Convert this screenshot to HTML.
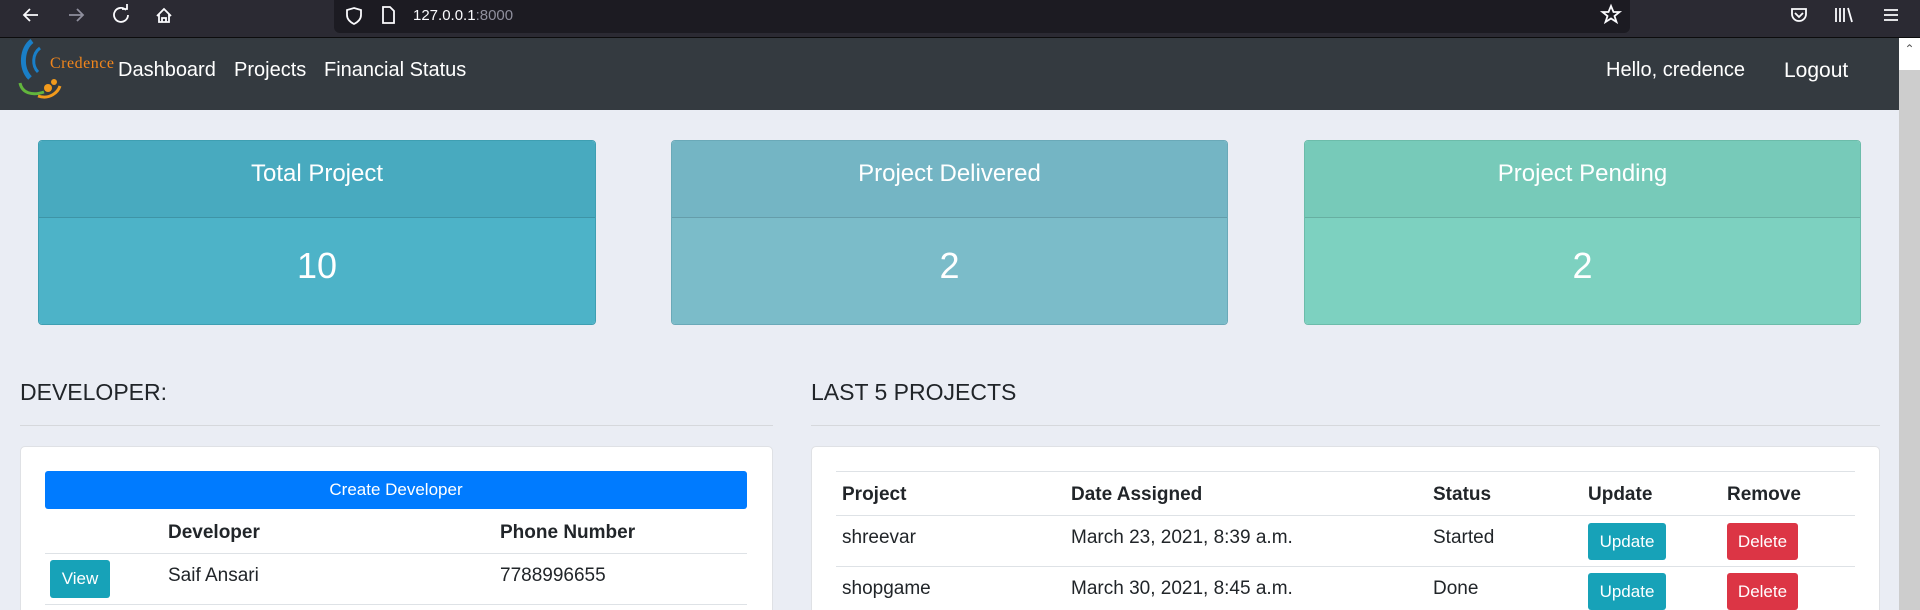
<!DOCTYPE html>
<html style="width:1920px;height:610px;overflow:hidden"><head><meta charset="utf-8"><style>
*{box-sizing:border-box;margin:0;padding:0}
body{width:1920px;height:610px;overflow:hidden;background:#eaedf4;font-family:"Liberation Sans",sans-serif;position:relative}
.abs{position:absolute}
.tb{left:0;top:0;width:1920px;height:38px;background:#2b2a33;border-bottom:1px solid #0c0c0d}
.url{left:334px;top:0;width:1296px;height:33px;background:#1c1b22;border-radius:0 0 6px 6px}
.nav{left:0;top:38px;width:1899px;height:72px;background:#343a40}
.nl{color:#fff;font-size:20px;top:59px}
.sb{left:1899px;top:38px;width:21px;height:572px;background:#cdcdcd}
.card{border-radius:4px;color:#fff;text-align:center;overflow:hidden}
.card .h{height:77px;line-height:66px;font-size:24px;border-bottom:1px solid rgba(0,0,0,.13)}
.card .b{height:108px;line-height:96px;font-size:36px}
.ttl{font-size:23px;color:#212529}
.hr{height:1px;background:#d6d8dc}
.panel{background:#fff;border-radius:5px;border:1px solid #dfe1e5}
.t{font-size:19px;color:#212529}
.bold{font-weight:bold}
.line{height:1px;background:#dee2e6}
.btn{color:#fff;font-size:17px;text-align:center;border-radius:3px}
</style></head><body>
<div class="abs tb"></div>
<div class="abs url"></div>
<svg class="abs" style="left:0;top:0" width="1920" height="38">
<g fill="none" stroke="#fbfbfe" stroke-width="1.8">
<path d="M38 15h-14M30 9l-6 6 6 6"/>
<path d="M69 15h14M77 9l6 6-6 6" stroke="#8f8f9d"/>
<path d="M126 10a7 7 0 1 0 2 5M122 9h5v-5"/>
<path d="M157 16l7-7 7 7M159 14v8h10v-8M162 22v-4h4v4"/>
<path d="M354 8l7 2v5c0 4-3 7-7 9-4-2-7-5-7-9v-5z"/>
<path d="M383 7h7l4 4v12h-11z"/>
<path d="M1611 6l2.5 6 6 0-5 4 2 6-5.5-3.5-5.5 3.5 2-6-5-4 6 0z"/>
<path d="M1792 9h14v5a7 7 0 0 1-14 0zM1795 13l4 4 4-4"/>
<path d="M1836 8v14M1840 8v14M1844 8v14M1848 8l4 14"/>
<path d="M1884 10h14M1884 15h14M1884 20h14"/>
</g>
<text x="413" y="20" fill="#fbfbfe" font-size="15" font-family="Liberation Sans">127.0.0.1<tspan fill="#8f8f9d">:8000</tspan></text>
</svg>
<div class="abs nav"></div>
<svg class="abs" style="left:16px;top:38px" width="100" height="62">
<path d="M16 3C6 10 4 30 14 40" stroke="#1a7fc8" stroke-width="5" fill="none"/>
<path d="M24 10C16 16 16 28 22 34" stroke="#1a7fc8" stroke-width="3" fill="none"/>
<path d="M4 45C6 55 16 58 28 54" stroke="#62b53d" stroke-width="3" fill="none"/>
<circle cx="32" cy="50" r="4" fill="#f29a1c"/><circle cx="38" cy="44" r="3" fill="#f29a1c"/>
<path d="M22 58C34 62 42 54 44 48" stroke="#f29a1c" stroke-width="3" fill="none"/>
<text x="34" y="30" fill="#f2861c" font-size="16" font-family="Liberation Serif" textLength="64">Credence</text>
</svg>
<div class="abs nl" style="left:118px">Dashboard</div>
<div class="abs nl" style="left:234px">Projects</div>
<div class="abs nl" style="left:324px">Financial Status</div>
<div class="abs nl" style="left:1606px">Hello, credence</div>
<div class="abs nl" style="left:1784px;font-size:21px">Logout</div>
<div class="abs sb"><div style="height:32px;background:#fff;color:#555;text-align:center;font-size:12px;line-height:22px">&#8963;</div></div>

<div class="abs card" style="left:38px;top:140px;width:558px;height:185px;border:1px solid #3e9fb2"><div class="h" style="background:#48aabf">Total Project</div><div class="b" style="background:#4db3c8">10</div></div>
<div class="abs card" style="left:671px;top:140px;width:557px;height:185px;border:1px solid #6aa9b8"><div class="h" style="background:#74b5c4">Project Delivered</div><div class="b" style="background:#7bbcc9">2</div></div>
<div class="abs card" style="left:1304px;top:140px;width:557px;height:185px;border:1px solid #6cbcaa"><div class="h" style="background:#77cab9">Project Pending</div><div class="b" style="background:#7dd1c0">2</div></div>

<div class="abs ttl" style="left:20px;top:379px">DEVELOPER:</div>
<div class="abs hr" style="left:20px;top:425px;width:753px"></div>
<div class="abs ttl" style="left:811px;top:379px">LAST 5 PROJECTS</div>
<div class="abs hr" style="left:811px;top:425px;width:1069px"></div>

<div class="abs panel" style="left:20px;top:446px;width:753px;height:170px"></div>
<div class="abs btn" style="left:45px;top:471px;width:702px;height:38px;line-height:38px;background:#007bff;font-size:17px">Create Developer</div>
<div class="abs t bold" style="left:168px;top:522px">Developer</div>
<div class="abs t bold" style="left:500px;top:522px">Phone Number</div>
<div class="abs line" style="left:45px;top:553px;width:702px"></div>
<div class="abs btn" style="left:50px;top:560px;width:60px;height:38px;line-height:38px;background:#17a2b8">View</div>
<div class="abs t" style="left:168px;top:565px">Saif Ansari</div>
<div class="abs t" style="left:500px;top:565px">7788996655</div>
<div class="abs line" style="left:45px;top:604px;width:702px"></div>

<div class="abs panel" style="left:811px;top:446px;width:1069px;height:170px"></div>
<div class="abs line" style="left:836px;top:471px;width:1019px"></div>
<div class="abs t bold" style="left:842px;top:484px">Project</div>
<div class="abs t bold" style="left:1071px;top:484px">Date Assigned</div>
<div class="abs t bold" style="left:1433px;top:484px">Status</div>
<div class="abs t bold" style="left:1588px;top:484px">Update</div>
<div class="abs t bold" style="left:1727px;top:484px">Remove</div>
<div class="abs line" style="left:836px;top:515px;width:1019px"></div>
<div class="abs t" style="left:842px;top:527px">shreevar</div>
<div class="abs t" style="left:1071px;top:527px">March 23, 2021, 8:39 a.m.</div>
<div class="abs t" style="left:1433px;top:527px">Started</div>
<div class="abs btn" style="left:1588px;top:523px;width:78px;height:37px;line-height:37px;background:#17a2b8">Update</div>
<div class="abs btn" style="left:1727px;top:523px;width:71px;height:37px;line-height:37px;background:#dc3545">Delete</div>
<div class="abs line" style="left:836px;top:566px;width:1019px"></div>
<div class="abs t" style="left:842px;top:578px">shopgame</div>
<div class="abs t" style="left:1071px;top:578px">March 30, 2021, 8:45 a.m.</div>
<div class="abs t" style="left:1433px;top:578px">Done</div>
<div class="abs btn" style="left:1588px;top:573px;width:78px;height:37px;line-height:37px;background:#17a2b8">Update</div>
<div class="abs btn" style="left:1727px;top:573px;width:71px;height:37px;line-height:37px;background:#dc3545">Delete</div>
</body></html>
